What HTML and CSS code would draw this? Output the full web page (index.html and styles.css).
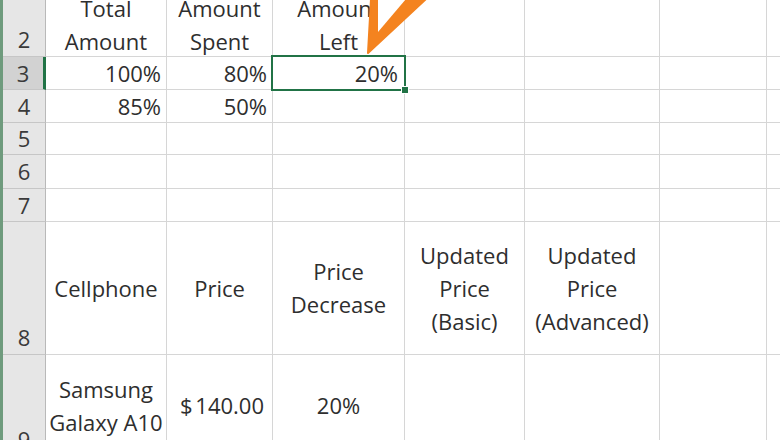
FILE: index.html
```html
<!DOCTYPE html>
<html>
<head>
<meta charset="utf-8">
<link rel="stylesheet" href="styles.css">
</head>
<body>
<div class="sheet">
  <div class="grid">
    <div class="rh bottom">2</div>
    <div class="c">Total<br>Amount</div>
    <div class="c">Amount<br>Spent</div>
    <div class="c">Amount<br>Left</div>
    <div class="c"></div><div class="c"></div><div class="c"></div><div class="c last"></div>

    <div class="rh sel">3</div>
    <div class="c num">100%</div>
    <div class="c num">80%</div>
    <div class="c num active">20%</div>
    <div class="c"></div><div class="c"></div><div class="c"></div><div class="c last"></div>

    <div class="rh">4</div>
    <div class="c num">85%</div>
    <div class="c num">50%</div>
    <div class="c"></div>
    <div class="c"></div><div class="c"></div><div class="c"></div><div class="c last"></div>

    <div class="rh">5</div>
    <div class="c"></div><div class="c"></div><div class="c"></div>
    <div class="c"></div><div class="c"></div><div class="c"></div><div class="c last"></div>

    <div class="rh">6</div>
    <div class="c"></div><div class="c"></div><div class="c"></div>
    <div class="c"></div><div class="c"></div><div class="c"></div><div class="c last"></div>

    <div class="rh">7</div>
    <div class="c"></div><div class="c"></div><div class="c"></div>
    <div class="c"></div><div class="c"></div><div class="c"></div><div class="c last"></div>

    <div class="rh bottom">8</div>
    <div class="c">Cellphone</div>
    <div class="c">Price</div>
    <div class="c">Price<br>Decrease</div>
    <div class="c">Updated<br>Price<br>(Basic)</div>
    <div class="c">Updated<br>Price<br>(Advanced)</div>
    <div class="c"></div><div class="c last"></div>

    <div class="rh bottom">9</div>
    <div class="c">Samsung<br>Galaxy A10</div>
    <div class="c acct"><span>$</span><span>140.00</span></div>
    <div class="c">20%</div>
    <div class="c"></div><div class="c"></div><div class="c"></div><div class="c last"></div>
  </div>
  <svg class="arrow" width="80" height="60" viewBox="0 0 80 60">
    <polygon points="8,53 11,-1 66,-1" fill="#f4831f" stroke="#f4831f" stroke-width="2" stroke-linejoin="round"/>
    <polygon points="18,32 18,-1 46,-1" fill="#ffffff"/>
  </svg>
</div>
</body>
</html>
```
FILE: styles.css
```css
html, body {
  margin: 0;
  padding: 0;
  background: #ffffff;
  overflow: hidden;
}

.sheet {
  position: relative;
  width: 780px;
  height: 440px;
  overflow: hidden;
  border-left: 3px solid #6f9b7d;
  box-sizing: border-box;
  font-family: "Open Sans", "Liberation Sans", sans-serif;
  font-size: 22px;
  color: #2e2e2e;
}

.grid {
  display: grid;
  grid-template-columns: 43px 121px 106px 132px 120px 135px 107px 1fr;
  grid-template-rows: 63px 33px 33px 32px 34px 33px 133px 102px;
  margin-top: -6px;
}

.c, .rh {
  box-sizing: border-box;
  border-right: 1px solid #d6d6d6;
  border-bottom: 1px solid #d6d6d6;
  display: flex;
  align-items: center;
  justify-content: center;
  text-align: center;
  line-height: 33px;
  white-space: nowrap;
}

.c.last {
  border-right: none;
}

.rh {
  background: #e6e6e6;
  border-right: 1px solid #b9b9b9;
  border-bottom: 1px solid #c6c6c6;
  color: #3a3a3a;
}

.rh.bottom {
  align-items: flex-end;
  padding-bottom: 0;
}

.rh.sel {
  background: #d2d2d2;
  border-right: 3px solid #217346;
}

.c.num {
  justify-content: flex-end;
  padding-right: 5px;
}

.c.active {
  position: relative;
  padding-right: 6px;
}

.c.active::after {
  content: "";
  position: absolute;
  left: -2px;
  top: -2px;
  right: -2px;
  bottom: -2px;
  border: 2px solid #217346;
}

.c.active::before {
  content: "";
  position: absolute;
  right: -5px;
  bottom: -5px;
  width: 6px;
  height: 6px;
  background: #217346;
  border: 1px solid #ffffff;
  z-index: 2;
}

.c.acct {
  justify-content: space-between;
  padding: 0 8px 0 13px;
}

.arrow {
  position: absolute;
  left: 357px;
  top: 0;
}
```
